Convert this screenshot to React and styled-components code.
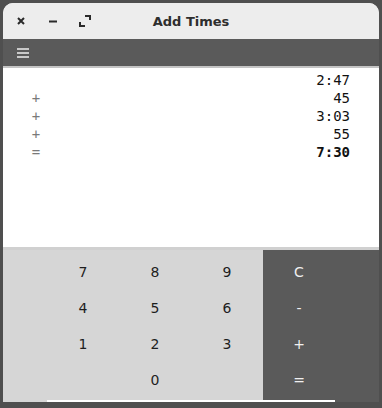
import React from 'react'
import styled, { createGlobalStyle } from 'styled-components'

const GlobalStyle = createGlobalStyle`
    html, body {
        margin: 0;
        padding: 0;
        background: #4f4f4f;
    }
    body {
        width: 382px;
        height: 408px;
        overflow: hidden;
    }
`

const Window = styled.div`
    margin: 3px 3px 0 3px;
    width: 376px;
    height: 399px;
    display: flex;
    flex-direction: column;
    background: #ececec;
    border-radius: 10px 10px 0 0;
    overflow: hidden;
`

const TitleBar = styled.div`
    height: 36px;
    display: flex;
    align-items: center;
    position: relative;
    background: #ededed;
`

const WinButton = styled.div`
    width: 32px;
    height: 36px;
    display: flex;
    align-items: center;
    justify-content: center;
    color: #2a2a2a;
`

const Title = styled.div`
    position: absolute;
    left: 0;
    right: 0;
    top: 0;
    bottom: 0;
    display: flex;
    align-items: center;
    justify-content: center;
    font-family: 'DejaVu Sans', sans-serif;
    font-weight: bold;
    font-size: 13px;
    color: #2e2e2e;
    pointer-events: none;
`

const Toolbar = styled.div`
    height: 27px;
    background: #5a5a5a;
    display: flex;
    align-items: center;
    padding-left: 14px;
    border-bottom: 2px solid #c4c4c4;
`

const Display = styled.div`
    height: 176px;
    background: #ffffff;
    padding: 3px 29px 0 27px;
    font-family: 'DejaVu Sans Mono', monospace;
    font-size: 14px;
    border-bottom: 3px solid #d0d0d0;
`

const Line = styled.div`
    display: flex;
    justify-content: space-between;
    height: 18px;
    line-height: 18px;
`

const Op = styled.span`
    color: #7a7a7a;
    width: 12px;
    text-align: center;
`

const Value = styled.span`
    color: #111;
    font-weight: ${(p) => (p.bold ? 'bold' : 'normal')};
`

const Keypad = styled.div`
    flex: 1;
    display: grid;
    grid-template-columns: 44px repeat(3, 72px) 1fr;
    background: #d6d6d6;
`

const Column = styled.div`
    display: grid;
    grid-template-rows: repeat(4, 36px);
    padding-top: 4px;
    background: ${(p) => (p.dark ? '#5a5a5a' : 'transparent')};
`

const Key = styled.div`
    display: flex;
    align-items: center;
    justify-content: center;
    font-family: 'DejaVu Sans', sans-serif;
    font-size: 14px;
    color: ${(p) => (p.dark ? '#f0f0f0' : '#1e1e1e')};
    padding-right: ${(p) => (p.dark ? '44px' : '0')};
`

const FooterLine = styled.div`
    height: 2px;
    margin-top: -2px;
    background: #ffffff;
    margin-left: 44px;
    width: 288px;
    position: relative;
`

const CloseIcon = () => (
    <svg width="10" height="10" viewBox="0 0 10 10">
        <path d="M2 2 L8 8 M8 2 L2 8" stroke="#2a2a2a" strokeWidth="2" />
    </svg>
)

const MinIcon = () => (
    <svg width="10" height="10" viewBox="0 0 10 10">
        <path d="M1 5.5 H9" stroke="#2a2a2a" strokeWidth="2" />
    </svg>
)

const MaxIcon = () => (
    <svg width="12" height="12" viewBox="0 0 12 12">
        <path d="M6 1 H11 V5 M1 7 V11 H6" stroke="#2a2a2a" strokeWidth="2" fill="none" />
    </svg>
)

const MenuIcon = () => (
    <svg width="13" height="10" viewBox="0 0 13 10">
        <path d="M0 1 H12 M0 5 H12 M0 9 H12" stroke="#eeeeee" strokeWidth="1.5" />
    </svg>
)

const lines = [
    { op: '', value: '2:47' },
    { op: '+', value: '45' },
    { op: '+', value: '3:03' },
    { op: '+', value: '55' },
    { op: '=', value: '7:30', bold: true },
]

const digitColumns = [
    ['7', '4', '1', ''],
    ['8', '5', '2', '0'],
    ['9', '6', '3', ''],
]

const operators = ['C', '-', '+', '=']

const App = () => {
    return (
        <>
            <GlobalStyle />
            <Window>
                <TitleBar>
                    <WinButton style={{ marginLeft: 2 }}>
                        <CloseIcon />
                    </WinButton>
                    <WinButton>
                        <MinIcon />
                    </WinButton>
                    <WinButton>
                        <MaxIcon />
                    </WinButton>
                    <Title>Add Times</Title>
                </TitleBar>
                <Toolbar>
                    <MenuIcon />
                </Toolbar>
                <Display>
                    {lines.map((l, i) => (
                        <Line key={i}>
                            <Op>{l.op}</Op>
                            <Value bold={l.bold}>{l.value}</Value>
                        </Line>
                    ))}
                </Display>
                <Keypad>
                    <Column />
                    {digitColumns.map((col, i) => (
                        <Column key={i}>
                            {col.map((d, j) => (
                                <Key key={j}>{d}</Key>
                            ))}
                        </Column>
                    ))}
                    <Column dark>
                        {operators.map((o) => (
                            <Key dark key={o}>
                                {o}
                            </Key>
                        ))}
                    </Column>
                </Keypad>
                <FooterLine />
            </Window>
        </>
    )
}

export default App
